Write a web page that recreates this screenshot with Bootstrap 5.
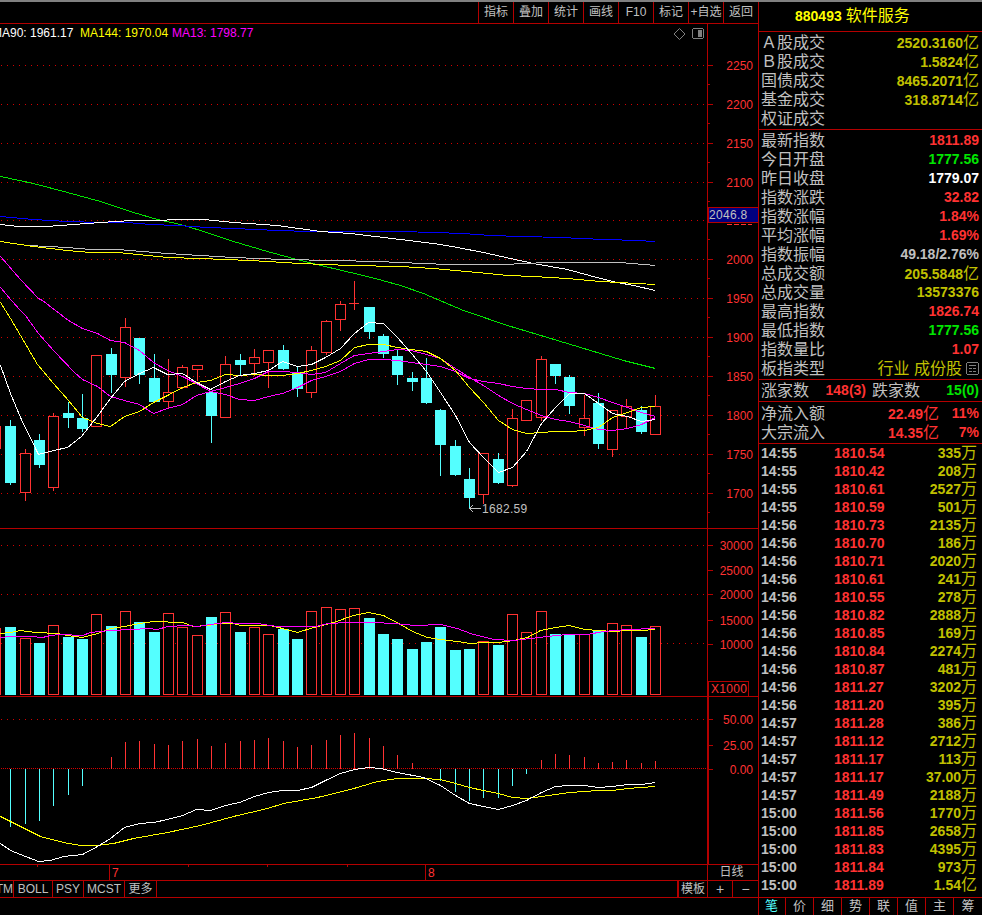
<!DOCTYPE html>
<html lang="zh-CN">
<head>
    <meta charset="UTF-8">
    <meta name="viewport" content="width=device-width, initial-scale=1.0">
    <title>880493 软件服务</title>
    <link href="https://cdn.jsdelivr.net/npm/bootstrap@5.3.0/dist/css/bootstrap.min.css" rel="stylesheet">
    <style>
        html, body {
            height: 915px;
            overflow: hidden;
            background-color: #000;
        }
        body {
            font-family: "Liberation Sans", "Noto Sans CJK SC", sans-serif;
            font-size: 12px;
            color: #c0c0c0;
            border-top: 2px solid #808080;
        }
        svg {
            display: block;
            overflow: hidden;
        }
        svg text {
            font-family: "Liberation Sans", "Noto Sans CJK SC", sans-serif;
            font-size: 12px;
        }
        .crisp {
            shape-rendering: crispEdges;
        }
        .main-col {
            width: 759px;
            height: 913px;
            flex: none;
            border-right: 1px solid #b40000;
        }
        .side-col {
            width: 223px;
            height: 913px;
            flex: none;
        }
        .tool-row {
            height: 22px;
            border-bottom: 1px solid #b40000;
        }
        .tool-btn {
            width: 35px;
            line-height: 21px;
            text-align: center;
            border-left: 1px solid #b40000;
        }
        .pane-top { height: 505px; border-bottom: 1px solid #b40000; }
        .pane-vol { height: 168px; border-bottom: 1px solid #b40000; }
        .pane-macd { height: 168px; border-bottom: 1px solid #b40000; }
        .axis-col {
            width: 51px;
            flex: none;
            border-left: 1px solid #b40000;
        }
        .pane-macd .axis-col {
            border-left-width: 2px;
        }
        .date-row {
            height: 16px;
            border-bottom: 1px solid #b40000;
        }
        .date-cell {
            width: 51px;
            flex: none;
            line-height: 15px;
            padding-right: 3px;
            text-align: center;
            border-left: 1px solid #b40000;
        }
        .tab-row {
            height: 17px;
            line-height: 16px;
            border-bottom: 1px solid #b40000;
        }
        .tab-cell {
            text-align: center;
            white-space: nowrap;
            overflow: hidden;
            border-right: 1px solid #b40000;
        }
        .tab-cell:nth-child(1) { width: 14px; text-align: right; direction: rtl; }
        .tab-cell:nth-child(2) { width: 39px; }
        .tab-cell:nth-child(3) { width: 31px; }
        .tab-cell:nth-child(4) { width: 41px; }
        .tab-cell:nth-child(5) { width: 32px; }
        .tpl-cell {
            width: 31px;
            text-align: center;
            border-left: 2px solid #b40000;
            border-right: 1px solid #b40000;
        }
        .zoom-cell {
            width: 25px;
            text-align: center;
            border-right: 1px solid #b40000;
            font-size: 14px;
        }
        .zoom-cell:last-child { border-right: 0; }
        .side-title {
            height: 30px;
            line-height: 27px;
            padding-left: 36px;
            border-bottom: 1px solid #b40000;
            color: #ff0;
            font-size: 16px;
            white-space: nowrap;
        }
        .side-title b {
            font-size: 14px;
            margin-right: 4px;
        }
        .side-sec {
            padding: 1px 3px 1px 2px;
            border-bottom: 1px solid #b40000;
        }
        .sec-count { height: 22px; padding-top: 0; padding-bottom: 0; line-height: 21px; }
        .sec-flow { height: 42px; padding-top: 2px; padding-bottom: 0; }
        .info-row {
            height: 19px;
            line-height: 19px;
            font-size: 16px;
            white-space: nowrap;
        }
        .sec-count .info-row { height: 21px; line-height: 21px; }
        .num {
            font-size: 14px;
            font-weight: 700;
        }
        .col-up { color: #ff3232; }
        .col-down { color: #00e600; }
        .col-vol { color: #c0c000; }
        .col-white { color: #fff; }
        .count-val { width: 57px; text-align: right; }
        .count-lab { margin-left: 6px; }
        .flow-pct { width: 40px; text-align: right; }
        .tick-list {
            height: 454px;
            padding: 0 5px 0 2px;
            border-bottom: 1px solid #b40000;
        }
        .tick-row {
            height: 18px;
            line-height: 18px;
            white-space: nowrap;
        }
        .tick-time { width: 73px; flex: none; }
        .tick-price { width: 52px; flex: none; }
        .tick-vol { flex: 1; text-align: right; }
        .unit-sign {
            font-size: 16px;
            font-weight: 400;
        }
        .side-tabs {
            margin-left: -1px;
        }
        .side-tab {
            width: 28px;
            height: 17px;
            line-height: 16px;
            font-size: 13px;
            text-align: center;
            border-right: 1px solid #b40000;
            flex: none;
        }
        .side-tab:last-child { border-right: 0; }
        .tab-on { color: #54ffff; }
    </style>
</head>
<body>
    <div class="d-flex">
        <div class="main-col d-flex flex-column">
            <div class="tool-row d-flex justify-content-end">
                <div class="tool-btn">指标</div>
                <div class="tool-btn">叠加</div>
                <div class="tool-btn">统计</div>
                <div class="tool-btn">画线</div>
                <div class="tool-btn">F10</div>
                <div class="tool-btn">标记</div>
                <div class="tool-btn">+自选</div>
                <div class="tool-btn">返回</div>
            </div>
            <div class="pane-top d-flex">
                <svg id="plotTop" class="crisp" width="707" height="504" viewBox="0 24 707 504"></svg>
                <div class="axis-col"><svg id="axisTop" class="crisp" width="50" height="504" viewBox="708 24 50 504"></svg></div>
            </div>
            <div class="pane-vol d-flex">
                <svg id="plotVol" class="crisp" width="707" height="167" viewBox="0 529 707 167"></svg>
                <div class="axis-col"><svg id="axisVol" class="crisp" width="50" height="167" viewBox="708 529 50 167"></svg></div>
            </div>
            <div class="pane-macd d-flex">
                <svg id="plotMacd" class="crisp" width="707" height="167" viewBox="0 697 707 167"></svg>
                <div class="axis-col"><svg id="axisMacd" class="crisp" width="49" height="167" viewBox="709 697 49 167"></svg></div>
            </div>
            <div class="date-row d-flex">
                <svg id="plotDate" class="crisp" width="707" height="15" viewBox="0 865 707 15"></svg>
                <div class="date-cell">日线</div>
            </div>
            <div class="tab-row d-flex">
                <div class="tab-cell">TM</div>
                <div class="tab-cell">BOLL</div>
                <div class="tab-cell">PSY</div>
                <div class="tab-cell">MCST</div>
                <div class="tab-cell">更多</div>
                <div class="ms-auto d-flex">
                    <div class="tpl-cell">模板</div>
                    <div class="zoom-cell">+</div>
                    <div class="zoom-cell">−</div>
                </div>
            </div>
        </div>
        <div class="side-col d-flex flex-column">
            <div class="side-title"><b>880493</b>软件服务</div>
            <div id="secTurnover" class="side-sec"></div>
            <div id="secIndex" class="side-sec"></div>
            <div class="side-sec sec-count">
                <div class="info-row d-flex">
                    <span>涨家数</span><span class="num col-up count-val">148(3)</span>
                    <span class="count-lab">跌家数</span><span class="num col-down ms-auto">15(0)</span>
                </div>
            </div>
            <div class="side-sec sec-flow">
                <div class="info-row d-flex">
                    <span class="me-auto">净流入额</span><span class="num col-up">22.49<span class="unit-sign">亿</span></span><span class="num col-up flow-pct">11%</span>
                </div>
                <div class="info-row d-flex">
                    <span class="me-auto">大宗流入</span><span class="num col-up">14.35<span class="unit-sign">亿</span></span><span class="num col-up flow-pct">7%</span>
                </div>
            </div>
            <div id="tickList" class="tick-list"></div>
            <div class="side-tabs d-flex">
                <div class="side-tab tab-on">笔</div>
                <div class="side-tab">价</div>
                <div class="side-tab">细</div>
                <div class="side-tab">势</div>
                <div class="side-tab">联</div>
                <div class="side-tab">值</div>
                <div class="side-tab">主</div>
                <div class="side-tab">筹</div>
            </div>
        </div>
    </div>

    <script src="https://cdn.jsdelivr.net/npm/bootstrap@5.3.0/dist/js/bootstrap.bundle.min.js"></script>
    <script>
        const RED = '#ff3232', CYAN = '#54ffff', LINE = '#b40000', DOT = '#d40000';
        const centerX = i => Math.round(10.3 + 14.33 * i);

        // type 1 = up (hollow red), 0 = down (solid cyan): [type, high, top, bottom, low]
        const candles = [
            [0,420,426,483,484],[1,449,453,492,500],[0,434,440,465,467],[1,413,416,487,490],[0,402,413,418,427],
            [0,394,418,429,431],[1,355,355,426,426],[0,348,354,375,392],[1,318,327,377,386],[0,338,338,375,383],
            [0,354,378,402,402],[1,359,392,401,408],[1,365,367,387,388],[1,365,365,369,380],[0,392,392,416,442],
            [1,356,364,417,417],[0,354,360,365,374],[1,349,357,363,375],[1,350,350,362,387],[0,345,350,369,369],
            [0,366,373,389,396],[1,346,350,392,397],[1,320,321,352,354],[1,301,304,319,330],[1,281,303,303,309],
            [0,307,307,332,338],[0,334,336,354,357],[0,349,356,375,384],[0,372,378,382,390],[0,358,378,403,403],
            [0,409,410,445,475],[0,440,446,475,475],[0,468,479,498,508],[1,453,453,494,503],[0,453,459,483,483],
            [1,409,418,485,486],[1,400,400,420,420],[1,356,359,417,420],[0,364,364,376,383],[0,375,377,406,413],
            [1,395,418,427,435],[0,393,403,444,448],[1,410,410,449,456],[1,399,406,416,428],[0,406,410,432,433],
            [1,395,406,434,434]
        ];

        const volumes = [
            [0,627],[1,638],[0,643],[1,625],[0,637],[0,639],[1,614],[0,626],[1,611],[0,622],[0,632],[1,613],
            [1,627],[1,635],[0,617],[1,612],[0,632],[1,627],[1,634],[0,629],[0,639],[1,611],[1,607],[1,609],
            [1,608],[0,618],[0,634],[0,639],[0,649],[0,642],[0,627],[0,650],[0,649],[1,641],[0,645],[1,614],
            [1,632],[1,611],[0,634],[0,635],[1,634],[0,631],[1,623],[1,625],[0,637],[1,626]
        ];

        // MACD bars: index, end y (above 769 is red, below is cyan)
        const macdBars = [
            [0,827],[1,824],[2,821],[3,806],[4,795],[5,786],[7,757],[8,742],[9,741],[10,744],[11,745],[12,741],
            [13,739],[14,746],[15,743],[16,741],[17,740],[18,738],[19,741],[20,747],[21,745],[22,740],[23,735],
            [24,733],[25,738],[26,746],[27,755],[28,763],[30,781],[31,792],[32,801],[33,798],[34,798],[35,786],
            [36,774],[37,760],[38,754],[39,755],[40,757],[41,763],[42,762],[43,760],[44,763],[45,761]
        ];

        const lines = {
            top: [
                ['#00e600', '0,176 33,183 67,192 100,201 133,212 157,219 180,224 200,230 233,241 267,251 300,260 333,268 367,276 382,280 400,285 423,293 463,310 507,325 547,337 590,350 623,360 655,368'],
                ['#0000ff', '0,216 33,219 67,221 100,222 127,222 150,224 177,225 207,227 233,228 277,230 310,231 400,231 433,232 463,233 490,235 520,236 563,237 577,238 607,239 635,240 655,241'],
                ['#ffffff', '0,224 18,226 45,226 60,225 100,222 132,220 203,219 233,222 277,225 320,231 350,233 400,239 433,243 457,247 483,252 510,258 533,263 567,269 600,278 617,282 633,285 655,290'],
                ['#c0c0c0', '28,245 67,247 90,249 117,249 167,253 200,255 233,257 283,259 333,260 377,261 400,262 447,264 503,264 547,262 620,262 655,265'],
                ['#ffff00', '0,241 33,246 67,250 90,252 117,252 167,257 200,258 250,260 300,263 350,265 400,266 433,268 477,272 507,275 533,276 567,278 600,281 655,284'],
                ['#ff00ff', '0,287 11,300 20,310 25,315 38,333 53,350 74,372 82,379 97,386 110,396 124,400 139,404 153,413 167,408 182,404 196,395 210,391 225,394 239,399 254,400 268,396 282,393 297,387 311,380 325,376 340,371 354,363 368,359 383,359 397,360 411,362 426,364 440,366 455,371 469,378 483,381 498,383 512,386 526,388 541,389 555,389 569,392 584,393 598,397 612,402 627,407 641,412 655,416'],
                ['#ff00ff', '0,256 20,279 38,298 42,300 55,310 68,320 82,328 97,333 110,340 124,342 139,350 153,362 167,370 182,376 196,383 210,391 225,387 239,383 254,378 268,371 282,371 297,372 311,374 325,372 340,363 354,355 368,353 383,351 397,349 411,350 426,354 440,358 455,368 469,377 483,385 498,395 512,403 526,409 541,415 555,419 569,421 584,425 598,429 612,430 627,428 641,424 655,417'],
                ['#ffff00', '0,302 10,318 20,335 37,364 53,383 68,400 82,417 97,423 110,426 124,416 139,411 153,402 167,395 182,387 196,382 210,380 225,374 239,375 254,374 268,375 282,375 297,373 311,370 325,366 340,360 354,347 368,344 383,344 397,347 411,349 426,351 440,358 455,370 469,387 483,402 498,420 512,429 526,433 541,432 555,431 569,431 584,430 598,427 612,417 627,412 641,407 655,406'],
                ['#ffffff', '0,365 10,393 20,417 38,454 53,450 67,447 81,436 96,417 110,398 124,381 139,373 153,367 167,374 182,373 196,382 210,389 225,381 239,375 254,373 268,370 282,361 297,366 311,364 325,357 340,348 354,333 368,322 383,323 397,337 411,353 426,371 440,392 455,415 469,442 483,457 498,472 512,467 526,451 541,423 555,407 569,393 584,393 598,403 612,413 627,416 641,421 655,419']
            ],
            vol: [
                ['#ffff00', '0,633 10,632 20,630 35,632 57,633 67,635 82,637 97,633 110,628 124,626 139,623 153,621 182,622 193,626 207,625 220,623 233,623 240,625 260,625 270,625 282,628 297,632 313,627 333,622 353,615 368,612 383,615 398,623 412,631 427,637 440,639 457,641 470,643 483,642 498,642 513,640 527,637 540,630 555,627 569,625 584,629 598,630 612,631 627,630 641,630 655,629'],
                ['#ff00ff', '0,637 10,636 30,636 42,637 50,635 60,634 82,635 90,632 110,630 132,629 147,628 157,629 167,626 187,625 197,626 217,623 227,622 237,623 257,623 263,624 277,626 315,626 328,623 347,622 373,622 393,623 415,625 440,624 457,628 470,633 493,639 513,640 530,638 547,636 567,634 587,634 603,631 627,629 655,628']
            ],
            macd: [
                ['#ffff00', '0,816 20,826 40,836 63,842 80,845 97,845 113,843 133,838 167,832 200,825 233,816 267,808 283,803 317,797 350,789 377,781 397,778 423,778 440,779 455,783 469,787 483,790 498,793 512,797 526,798 541,796 555,794 569,792 584,791 598,790 612,790 627,788 641,787 655,786'],
                ['#ffffff', '0,843 10,850 20,854 38,861 50,860 63,856 82,854 97,846 110,838 124,827 139,823 153,822 167,819 182,815 196,809 210,810 225,805 239,802 254,796 268,792 282,790 297,790 311,787 325,780 340,773 354,769 368,767 380,768 397,772 423,777 440,785 455,795 469,803 483,806 498,809 512,805 526,800 541,792 555,786 569,785 584,785 598,787 612,786 627,784 641,784 655,782']
            ]
        };

        // dotted grid line, one 1px dash every `step` pixels
        const dotLine = (y, step, x2 = 704) => {
            let d = '';
            for (let x = 1; x < x2; x += step) d += `M${x} ${y + .5}h1`;
            return `<path d="${d}" stroke="${DOT}" fill="none"/>`;
        };
        const polyline = ([color, pts]) =>
            `<polyline points="${pts.replace(/(\d+),(\d+)/g, (m, x, y) => `${+x + .5},${+y + .5}`)}" fill="none" stroke="${color}"/>`;
        const vLine = (x, y1, y2, color) =>
            `<line x1="${x + .5}" x2="${x + .5}" y1="${y1}" y2="${y2}" stroke="${color}"/>`;

        // main candle pane
        const gridYs = [65, 104, 143, 182, 220, 259, 298, 337, 376, 415, 454, 493];
        let plotTop = gridYs.map(y => dotLine(y, 6)).join('');
        plotTop += '<rect x="-9" y="426.5" width="9.5" height="22" fill="#000" stroke="' + RED + '"/>';
        candles.forEach(([up, high, t, b, low], i) => {
            const c = centerX(i), color = up ? RED : CYAN;
            plotTop += vLine(c, high, low + 1, color);
            if (t === b) {
                plotTop += `<line x1="${c - 5}" x2="${c + 5}" y1="${t + .5}" y2="${t + .5}" stroke="${color}"/>`;
            } else if (up) {
                plotTop += `<rect x="${c - 5 + .5}" y="${t + .5}" width="10" height="${b - t}" fill="#000" stroke="${RED}"/>`;
            } else {
                plotTop += `<rect x="${c - 5}" y="${t}" width="11" height="${b - t}" fill="${CYAN}"/>`;
            }
        });
        plotTop += lines.top.map(polyline).join('');
        plotTop += `<text x="-8" y="37" fill="#fff">MA90: 1961.17</text>
                <text x="80" y="37" fill="#ff0">MA144: 1970.04</text>
                <text x="172" y="37" fill="#f0f">MA13: 1798.77</text>`;
        plotTop += `<line x1="469" x2="481" y1="508.5" y2="508.5" stroke="#c0c0c0"/>
                <polyline points="473,505 470,508.5 473,512" fill="none" stroke="#c0c0c0"/>
                <text x="482" y="512.5" fill="#c0c0c0" letter-spacing=".3">1682.59</text>`;
        plotTop += `<polygon points="679.5,28.5 685,34 679.5,39.5 674,34" fill="none" stroke="#808080" style="shape-rendering:auto"/>
                <rect x="692.5" y="28.5" width="11" height="10" rx="2" fill="none" stroke="#808080"/>
                <rect x="698" y="30" width="4" height="7" fill="#808080"/>`;
        document.getElementById('plotTop').innerHTML = plotTop;

        const axisLabel = (label, y) => `<text x="753" y="${y + 5}" fill="${RED}" text-anchor="end">${label}</text>`;
        const axisTick = (y, x2 = 713) => `<line x1="708" x2="${x2}" y1="${y + .5}" y2="${y + .5}" stroke="${LINE}"/>`;

        const topLabels = [2250, 2200, 2150, 2100, 2050, 2000, 1950, 1900, 1850, 1800, 1750, 1700];
        let axisTop = '';
        topLabels.forEach((v, k) => {
            // 2050 sits under the last-price tag
            if (v !== 2050) axisTop += axisLabel(v, gridYs[k]);
            axisTop += axisTick(gridYs[k]) + axisTick(gridYs[k] + 19, 710);
        });
        axisTop += `<path d="M727 224.5h5M734 224.5h5M741 224.5h5M748 224.5h4" stroke="${RED}" fill="none"/>
                    <rect x="708" y="207.5" width="50" height="15" fill="#000080" stroke="${LINE}"/>
                    <text x="709" y="219" fill="#c0c0c0" letter-spacing=".3">2046.8</text>`;
        document.getElementById('axisTop').innerHTML = axisTop;

        // volume pane
        let plotVol = [545, 594, 643].map(y => dotLine(y, 6)).join('');
        plotVol += `<rect x="-9" y="628.5" width="9.5" height="66" fill="#000" stroke="${RED}"/>`;
        volumes.forEach(([up, t], i) => {
            const c = centerX(i);
            plotVol += up
                ? `<rect x="${c - 5 + .5}" y="${t + .5}" width="10" height="${694 - t}" fill="#000" stroke="${RED}"/>`
                : `<rect x="${c - 5}" y="${t}" width="11" height="${695 - t}" fill="${CYAN}"/>`;
        });
        plotVol += lines.vol.map(polyline).join('');
        document.getElementById('plotVol').innerHTML = plotVol;

        let axisVol = '';
        [[30000, 545], [25000, 570], [20000, 594], [15000, 620], [10000, 644]].forEach(([v, y]) => {
            axisVol += axisLabel(v, y) + axisTick(y);
        });
        axisVol += `<rect x="708.5" y="681.5" width="40" height="20" fill="#000" stroke="${LINE}"/>
                    <text x="711" y="693" fill="${RED}" letter-spacing=".3">X1000</text>`;
        document.getElementById('axisVol').innerHTML = axisVol;

        // MACD pane
        let plotMacd = dotLine(719, 6) + dotLine(768, 2, 707);
        macdBars.forEach(([i, y]) => {
            const c = centerX(i);
            plotMacd += y < 769 ? vLine(c, y, 769, RED) : vLine(c, 769, y, CYAN);
        });
        plotMacd += lines.macd.map(polyline).join('');
        document.getElementById('plotMacd').innerHTML = plotMacd;

        let axisMacd = '';
        [['50.00', 719], ['25.00', 745], ['0.00', 769]].forEach(([v, y]) => {
            axisMacd += axisLabel(v, y) + axisTick(y);
        });
        document.getElementById('axisMacd').innerHTML = axisMacd;

        // date row
        let dateRow = [37, 188, 267, 347].map(x => vLine(x, 865, 867, LINE)).join('');
        dateRow += vLine(109, 865, 880, LINE) + vLine(425, 865, 880, LINE);
        dateRow += `<text x="112" y="877" fill="${RED}">7</text><text x="428" y="877" fill="${RED}">8</text>`;
        document.getElementById('plotDate').innerHTML = dateRow;

        // side panel
        const turnover = [
            ['Ａ股成交', '2520.3160', '亿'],
            ['Ｂ股成交', '1.5824', '亿'],
            ['国债成交', '8465.2071', '亿'],
            ['基金成交', '318.8714', '亿'],
            ['权证成交', '', '']
        ];
        document.getElementById('secTurnover').innerHTML = turnover.map(([label, v, unit]) =>
            `<div class="info-row d-flex justify-content-between"><span>${label}</span><span class="num col-vol">${v}<span class="unit-sign">${unit}</span></span></div>`
        ).join('');

        const indexRows = [
            ['最新指数', '1811.89', 'col-up'],
            ['今日开盘', '1777.56', 'col-down'],
            ['昨日收盘', '1779.07', 'col-white'],
            ['指数涨跌', '32.82', 'col-up'],
            ['指数涨幅', '1.84%', 'col-up'],
            ['平均涨幅', '1.69%', 'col-up'],
            ['指数振幅', '49.18/2.76%', ''],
            ['总成交额', '205.5848<span class="unit-sign">亿</span>', 'col-vol'],
            ['总成交量', '13573376', 'col-vol'],
            ['最高指数', '1826.74', 'col-up'],
            ['最低指数', '1777.56', 'col-down'],
            ['指数量比', '1.07', 'col-up']
        ];
        const gridIcon = `<svg class="crisp" width="13" height="13" viewBox="0 0 13 13" fill="none" stroke="#808080">
            <rect x=".5" y=".5" width="12" height="12" rx="2"/><path d="M3 3.5h7M3 6.5h3M7 6.5h3M3 9.5h3M7 9.5h3"/></svg>`;
        document.getElementById('secIndex').innerHTML = indexRows.map(([label, v, cls]) =>
            `<div class="info-row d-flex justify-content-between"><span>${label}</span><span class="num ${cls}">${v}</span></div>`
        ).join('') + `<div class="info-row d-flex align-items-center"><span class="me-auto">板指类型</span><span class="col-vol me-1">行业 成份股</span>${gridIcon}</div>`;

        const ticks = [
            ['14:55','1810.54','335','万'],['14:55','1810.42','208','万'],['14:55','1810.61','2527','万'],
            ['14:55','1810.59','501','万'],['14:56','1810.73','2135','万'],['14:56','1810.70','186','万'],
            ['14:56','1810.71','2020','万'],['14:56','1810.61','241','万'],['14:56','1810.55','278','万'],
            ['14:56','1810.82','2888','万'],['14:56','1810.85','169','万'],['14:56','1810.84','2274','万'],
            ['14:56','1810.87','481','万'],['14:56','1811.27','3202','万'],['14:56','1811.20','395','万'],
            ['14:57','1811.28','386','万'],['14:57','1811.12','2712','万'],['14:57','1811.17','113','万'],
            ['14:57','1811.17','37.00','万'],['14:57','1811.49','2188','万'],['15:00','1811.56','1770','万'],
            ['15:00','1811.85','2658','万'],['15:00','1811.83','4395','万'],['15:00','1811.84','973','万'],
            ['15:00','1811.89','1.54','亿']
        ];
        document.getElementById('tickList').innerHTML = ticks.map(([t, p, v, unit]) =>
            `<div class="tick-row d-flex num"><span class="tick-time">${t}</span><span class="tick-price col-up">${p}</span><span class="tick-vol col-vol">${v}<span class="unit-sign">${unit}</span></span></div>`
        ).join('');
    </script>
</body>
</html>
